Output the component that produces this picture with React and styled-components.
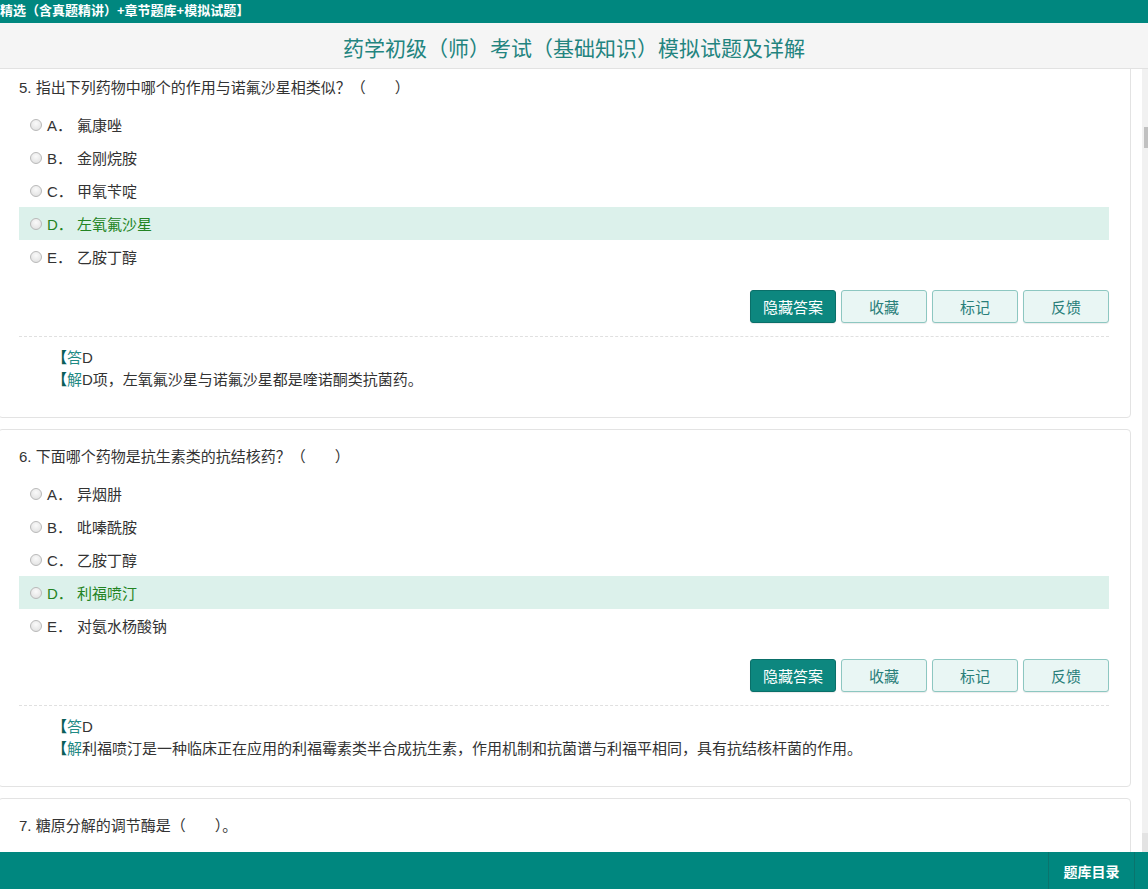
import React from "react";
import styled, { createGlobalStyle } from "styled-components";

const GlobalStyle = createGlobalStyle`
  html, body { margin: 0; padding: 0; height: 100%; overflow: hidden; }
  body {
    font-family: "Liberation Sans", "Noto Sans CJK SC", sans-serif;
    color: #333;
    background: #fff;
  }
  * { box-sizing: border-box; }
`;

const TEAL = "#00877f";

const Page = styled.div`
  height: 100vh;
  display: flex;
  flex-direction: column;
  overflow: hidden;
`;

const TopBar = styled.div`
  height: 23px;
  flex: none;
  background: ${TEAL};
  color: #fff;
  font-size: 13px;
  font-weight: 600;
  line-height: 22px;
  white-space: nowrap;
  overflow: hidden;
`;

const Header = styled.header`
  height: 46px;
  flex: none;
  background: #f5f5f5;
  border-bottom: 1px solid #e2e2e2;
  display: flex;
  align-items: center;
  justify-content: center;
`;

const Title = styled.h1`
  margin: 0;
  font-size: 21px;
  font-weight: 400;
  color: #23847f;
  padding-top: 2px;
`;

const Main = styled.div`
  flex: 1;
  min-height: 0;
  display: flex;
`;

const Content = styled.div`
  flex: 1;
  min-width: 0;
  overflow: hidden;
`;

const CardList = styled.div`
  margin-top: -9px;
  display: flex;
  flex-direction: column;
  gap: 11px;
`;

const Card = styled.section`
  margin-left: -2px;
  margin-right: 11px;
  border: 1px solid #e3e3e3;
  border-radius: 4px;
  background: #fff;
  padding: 17px 21px 26px 20px;
`;

const Question = styled.div`
  font-size: 15px;
  line-height: 20px;
  color: #333;
  white-space: pre;
`;

const Options = styled.ul`
  list-style: none;
  margin: 10px 0 0;
  padding: 0;
`;

const Option = styled.li`
  height: 33px;
  display: flex;
  align-items: center;
  padding-left: 11px;
  font-size: 15px;
  background: ${(p) => (p.$correct ? "#dcf1eb" : "transparent")};
  color: ${(p) => (p.$correct ? "#238423" : "#333")};
`;

const Radio = styled.span`
  width: 12px;
  height: 12px;
  border-radius: 50%;
  border: 1px solid #b9b9b9;
  background: radial-gradient(circle at 50% 35%, #fafafa 0%, #e6e6e6 70%, #d8d8d8 100%);
  flex: none;
`;

const Letter = styled.span`
  margin-left: 5px;
  width: 30px;
  flex: none;
`;

const Actions = styled.div`
  margin-top: 17px;
  display: flex;
  justify-content: flex-end;
  gap: 5px;
`;

const Button = styled.button`
  width: 86px;
  height: 33px;
  border-radius: 3px;
  font-family: inherit;
  font-size: 15px;
  cursor: pointer;
  border: 1px solid ${(p) => (p.$primary ? "#0a6f69" : "#8dc7c1")};
  background: ${(p) => (p.$primary ? "#0d877f" : "#e9f6f4")};
  color: ${(p) => (p.$primary ? "#fff" : "#2a7f7a")};
  box-shadow: 0 1px 1px rgba(0, 0, 0, 0.08);
`;

const Divider = styled.hr`
  margin: 13px 0 0;
  border: 0;
  border-top: 1px dashed #e0e0e0;
`;

const Analysis = styled.div`
  padding: 10px 0 0 33px;
  font-size: 15px;
  line-height: 22px;
  color: #333;
`;

const Bracket = styled.span`
  color: #0b5e59;
  font-weight: 700;
`;

const Tag = styled.span`
  color: #1f8a84;
`;

const ScrollTrack = styled.div`
  width: 6px;
  flex: none;
  background: #f1f1f1;
  display: flex;
  flex-direction: column;
`;

const ScrollThumb = styled.div`
  margin-top: 58px;
  height: 21px;
  margin-left: 2px;
  background: #c1c1c1;
`;

const ScrollSpacer = styled.div`
  flex: 1;
`;

const ScrollArrow = styled.div`
  height: 19px;
  background: #e3e3e3;
`;

const BottomBar = styled.footer`
  height: 37px;
  flex: none;
  background: ${TEAL};
  display: flex;
  overflow: hidden;
`;

const BottomNav = styled.nav`
  margin-left: auto;
  margin-right: -72px;
  display: flex;
`;

const NavItem = styled.a`
  width: 86px;
  display: flex;
  align-items: center;
  justify-content: center;
  border-left: 1px solid #0a746d;
  color: #fff;
  font-size: 14px;
  font-weight: 700;
  text-decoration: none;
`;

const questions = [
  {
    q: "5. 指出下列药物中哪个的作用与诺氟沙星相类似？（       ）",
    options: ["氟康唑", "金刚烷胺", "甲氧苄啶", "左氧氟沙星", "乙胺丁醇"],
    answer: 3,
    shown: true,
    explain: "D项，左氧氟沙星与诺氟沙星都是喹诺酮类抗菌药。",
  },
  {
    q: "6. 下面哪个药物是抗生素类的抗结核药？（       ）",
    options: ["异烟肼", "吡嗪酰胺", "乙胺丁醇", "利福喷汀", "对氨水杨酸钠"],
    answer: 3,
    shown: true,
    explain: "利福喷汀是一种临床正在应用的利福霉素类半合成抗生素，作用机制和抗菌谱与利福平相同，具有抗结核杆菌的作用。",
  },
  {
    q: "7. 糖原分解的调节酶是（       ）。",
    options: ["磷酸化酶", "己糖激酶", "丙酮酸激酶", "糖原合酶", "磷酸果糖激酶"],
    answer: 0,
    shown: false,
    explain: "",
  },
];

const letters = ["A", "B", "C", "D", "E"];

function QuestionCard({ item }) {
  return (
    <Card>
      <Question>{item.q}</Question>
      <Options>
        {item.options.map((o, i) => (
          <Option key={i} $correct={item.shown && i === item.answer}>
            <Radio />
            <Letter>{letters[i]}．</Letter>
            <span>{o}</span>
          </Option>
        ))}
      </Options>
      <Actions>
        <Button $primary>{item.shown ? "隐藏答案" : "查看答案"}</Button>
        <Button>收藏</Button>
        <Button>标记</Button>
        <Button>反馈</Button>
      </Actions>
      {item.shown && (
        <>
          <Divider />
          <Analysis>
            <div>
              <Bracket>【</Bracket>
              <Tag>答</Tag>
              {letters[item.answer]}
            </div>
            <div>
              <Bracket>【</Bracket>
              <Tag>解</Tag>
              {item.explain}
            </div>
          </Analysis>
        </>
      )}
    </Card>
  );
}

export default function App() {
  return (
    <Page>
      <GlobalStyle />
      <TopBar>精选（含真题精讲）+章节题库+模拟试题】</TopBar>
      <Header>
        <Title>药学初级（师）考试（基础知识）模拟试题及详解</Title>
      </Header>
      <Main>
        <Content>
          <CardList>
            {questions.map((q, i) => (
              <QuestionCard key={i} item={q} />
            ))}
          </CardList>
        </Content>
        <ScrollTrack>
          <ScrollThumb />
          <ScrollSpacer />
          <ScrollArrow />
        </ScrollTrack>
      </Main>
      <BottomBar>
        <BottomNav>
          <NavItem href="#">题库目录</NavItem>
          <NavItem href="#">提交试卷</NavItem>
        </BottomNav>
      </BottomBar>
    </Page>
  );
}
